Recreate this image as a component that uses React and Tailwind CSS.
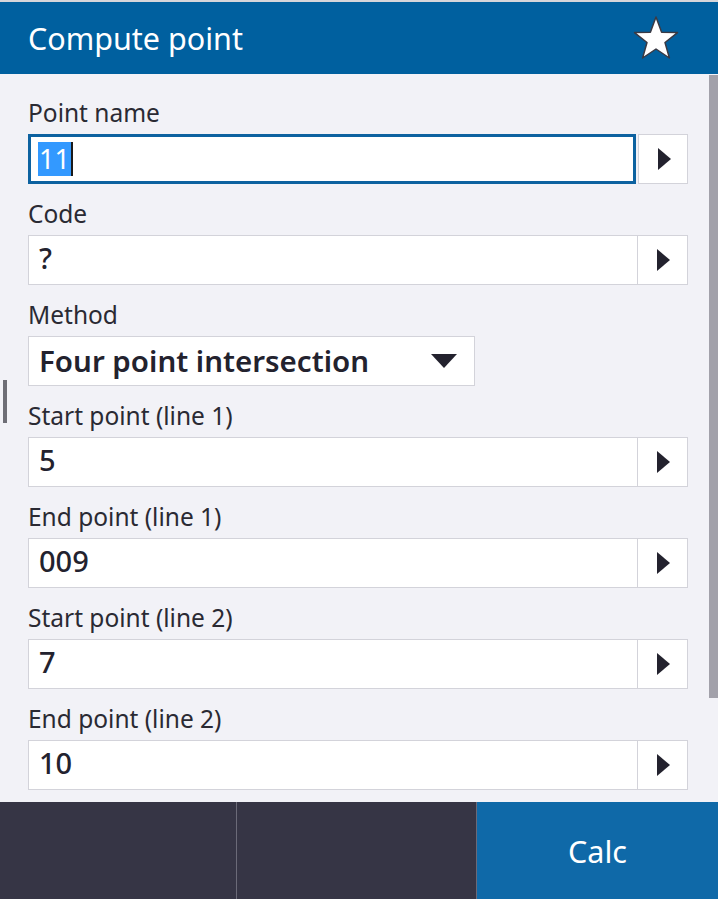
import React from 'react';

const font = { fontFamily: '"Noto Sans", "Open Sans", sans-serif' };

const Arrow = () => (
  <svg width="15" height="22" viewBox="0 0 15 22"><path d="M1 0 L14 11 L1 22 Z" fill="#23222e" /></svg>
);

const Label = ({ children }) => (
  <div className="h-[51px] flex items-end pb-[5px] text-[24.5px] leading-[32px] text-[#2a2a33]">{children}</div>
);

const Field = ({ label, value, focused }) => (
  <div>
    <Label>{label}</Label>
    {focused ? (
      <div className="flex h-[50px] gap-[2px]">
        <div className="flex-1 border-[3px] border-[#0d62a0] bg-white flex items-center pl-[7px]">
          <span className="bg-[#3399ff] text-white text-[27px] leading-[34px] px-[1px]">{value}</span>
          <span className="w-[2px] h-[34px] bg-[#1a1a1a]" />
        </div>
        <div className="w-[50px] border border-[#d3d3da] bg-white flex items-center justify-center pl-[2px]"><Arrow /></div>
      </div>
    ) : (
      <div className="flex h-[50px] border border-[#d3d3da] bg-white">
        <div className="flex-1 flex items-center pl-[10px] pb-[5px] text-[29px] font-medium text-[#23222e]">{value}</div>
        <div className="w-[50px] border-l border-[#d3d3da] flex items-center justify-center pl-[2px]"><Arrow /></div>
      </div>
    )}
  </div>
);

export default function App() {
  return (
    <div className="w-[718px] h-[899px] bg-[#f2f2f7] flex flex-col overflow-hidden relative" style={font}>
      <div className="h-[2px] bg-[#d6d6da]" />
      <div className="h-[72px] bg-[#00609f] flex items-center justify-between pl-[28px] pr-[38px]">
        <span className="text-white text-[30.5px] leading-none">Compute point</span>
        <svg width="48" height="46" viewBox="0 0 48 46">
          <path d="M24 2 L29.6 17.2 L45.5 17.6 L33 27.5 L37.4 43 L24 34 L10.6 43 L15 27.5 L2.5 17.6 L18.4 17.2 Z" fill="#ffffff" stroke="#3a3a44" strokeWidth="1.5" strokeLinejoin="round" />
        </svg>
      </div>
      <div className="flex-1 flex">
        <div className="flex-1 pl-[28px] pr-[21px] pt-[9px]">
          <Field label="Point name" value="11" focused />
          <Field label="Code" value="?" />
          <div>
            <Label>Method</Label>
            <div className="w-[447px] h-[50px] border border-[#d3d3da] bg-white flex items-center justify-between pl-[10px] pr-[17px]">
              <span className="text-[29.5px] font-semibold text-[#23222e]">Four point intersection</span>
              <svg width="26" height="14" viewBox="0 0 26 14"><path d="M0 0 L26 0 L13 14 Z" fill="#23222e" /></svg>
            </div>
          </div>
          <Field label="Start point (line 1)" value="5" />
          <Field label="End point (line 1)" value="009" />
          <Field label="Start point (line 2)" value="7" />
          <Field label="End point (line 2)" value="10" />
        </div>
        <div className="w-[9px] pt-[1px] pb-[104px]">
          <div className="h-full bg-[#a2a1aa]" />
        </div>
      </div>
      <div className="absolute left-[3px] top-[380px] w-[4px] h-[43px] bg-[#6e6e76]" />
      <div className="h-[97px] flex bg-[#363545]">
        <div className="w-[237px] border-r border-[#6b6a78]" />
        <div className="w-[240px] border-r border-[#6b6a78]" />
        <div className="flex-1 bg-[#0f69a8] flex items-center justify-center pt-[3px] text-white text-[30.5px]">Calc</div>
      </div>
    </div>
  );
}
